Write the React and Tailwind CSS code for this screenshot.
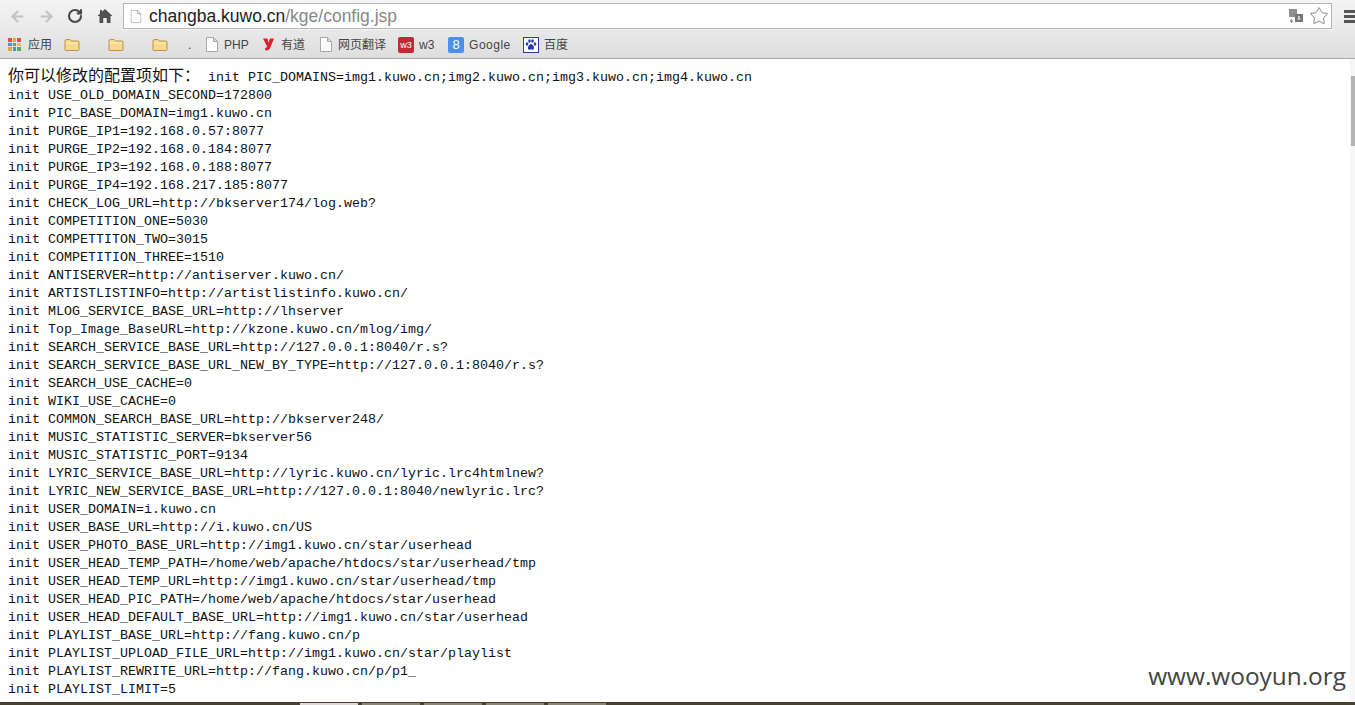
import { ArrowLeft, ArrowRight, RotateCw, Star } from "lucide-react";

const LINES = [
  "USE_OLD_DOMAIN_SECOND=172800",
  "PIC_BASE_DOMAIN=img1.kuwo.cn",
  "PURGE_IP1=192.168.0.57:8077",
  "PURGE_IP2=192.168.0.184:8077",
  "PURGE_IP3=192.168.0.188:8077",
  "PURGE_IP4=192.168.217.185:8077",
  "CHECK_LOG_URL=http://bkserver174/log.web?",
  "COMPETITION_ONE=5030",
  "COMPETTITON_TWO=3015",
  "COMPETITION_THREE=1510",
  "ANTISERVER=http://antiserver.kuwo.cn/",
  "ARTISTLISTINFO=http://artistlistinfo.kuwo.cn/",
  "MLOG_SERVICE_BASE_URL=http://lhserver",
  "Top_Image_BaseURL=http://kzone.kuwo.cn/mlog/img/",
  "SEARCH_SERVICE_BASE_URL=http://127.0.0.1:8040/r.s?",
  "SEARCH_SERVICE_BASE_URL_NEW_BY_TYPE=http://127.0.0.1:8040/r.s?",
  "SEARCH_USE_CACHE=0",
  "WIKI_USE_CACHE=0",
  "COMMON_SEARCH_BASE_URL=http://bkserver248/",
  "MUSIC_STATISTIC_SERVER=bkserver56",
  "MUSIC_STATISTIC_PORT=9134",
  "LYRIC_SERVICE_BASE_URL=http://lyric.kuwo.cn/lyric.lrc4htmlnew?",
  "LYRIC_NEW_SERVICE_BASE_URL=http://127.0.0.1:8040/newlyric.lrc?",
  "USER_DOMAIN=i.kuwo.cn",
  "USER_BASE_URL=http://i.kuwo.cn/US",
  "USER_PHOTO_BASE_URL=http://img1.kuwo.cn/star/userhead",
  "USER_HEAD_TEMP_PATH=/home/web/apache/htdocs/star/userhead/tmp",
  "USER_HEAD_TEMP_URL=http://img1.kuwo.cn/star/userhead/tmp",
  "USER_HEAD_PIC_PATH=/home/web/apache/htdocs/star/userhead",
  "USER_HEAD_DEFAULT_BASE_URL=http://img1.kuwo.cn/star/userhead",
  "PLAYLIST_BASE_URL=http://fang.kuwo.cn/p",
  "PLAYLIST_UPLOAD_FILE_URL=http://img1.kuwo.cn/star/playlist",
  "PLAYLIST_REWRITE_URL=http://fang.kuwo.cn/p/p1_",
  "PLAYLIST_LIMIT=5",
  "PLAYLIST_LIMIT_EX=10",
];

const APP_DOTS = ["#d9534a", "#e8a33c", "#d9534a", "#4a90d9", "#5cab5c", "#e8c13c", "#e8a33c", "#4a90d9", "#5cab5c"];

function Folder({ className }) {
  return (
    <svg width="16" height="14" viewBox="0 0 16 14" className={className}>
      <path d="M1 3 Q1 1.5 2.5 1.5 H6 L7.5 3 H14 Q15 3 15 4 V11.5 Q15 12.5 14 12.5 H2 Q1 12.5 1 11.5 Z" fill="#f6d98c" stroke="#b8934a" />
      <path d="M2 5 H14" stroke="#fdf0c4" />
    </svg>
  );
}

function Doc({ className }) {
  return (
    <svg width="12" height="15" viewBox="0 0 12 15" className={className}>
      <path d="M.5 .5 H7.5 L11.5 4.5 V14.5 H.5 Z M7.5 .5 V4.5 H11.5" fill="#fff" stroke="#a8a8a8" />
    </svg>
  );
}

function Apps() {
  return (
    <div className="ml-2 grid grid-cols-3 gap-[1px] w-[13px]">
      {APP_DOTS.map((c, i) => (
        <span key={i} className="block w-[3.6px] h-[3.6px]" style={{ backgroundColor: c }} />
      ))}
    </div>
  );
}

function Bookmarks() {
  return (
    <div className="h-[29px] flex items-center text-[12px] text-[#444] font-['Liberation_Sans','Noto_Sans_CJK_SC',sans-serif]">
      <Apps />
      <span className="ml-[7px]">应用</span>
      <Folder className="ml-[12px]" />
      <Folder className="ml-[28px]" />
      <Folder className="ml-[28px]" />
      <span className="ml-[20px] w-[3px]">.</span>
      <Doc className="ml-[15px]" />
      <span className="ml-[6px] w-[25px]">PHP</span>
      <svg width="11" height="13" viewBox="0 0 11 13" className="ml-[14px]">
        <path d="M0 .5 H4.5 L5.5 5 L7 .5 H11 L7.5 9 Q6.5 12.5 2.5 12.5 L2 10 Q4 10 4.2 8.6 Z" fill="#d8202c" />
      </svg>
      <span className="ml-[7px]">有道</span>
      <Doc className="ml-[15px]" />
      <span className="ml-[6px]">网页翻译</span>
      <span className="ml-[12px] w-[16px] h-[16px] rounded-[2px] bg-[#bd2c33] text-white text-[9px] leading-[16px] text-center">w3</span>
      <span className="ml-[5px] w-[16px]">w3</span>
      <span className="ml-[13px] w-[16px] h-[16px] rounded-[2px] bg-[#4a8fe8] text-white text-[13px] leading-[16px] text-center">8</span>
      <span className="ml-[5px] w-[42px] tracking-[0.5px]">Google</span>
      <svg width="16" height="16" viewBox="0 0 16 16" className="ml-[12px]">
        <rect x=".5" y=".5" width="15" height="15" fill="#fff" stroke="#2a3bb0" />
        <g fill="#2a3bb0">
          <ellipse cx="4" cy="7" rx="1.3" ry="1.8" />
          <ellipse cx="6.5" cy="4" rx="1.3" ry="1.8" />
          <ellipse cx="9.5" cy="4" rx="1.3" ry="1.8" />
          <ellipse cx="12" cy="7" rx="1.3" ry="1.8" />
          <path d="M8 7 C10 7 12 11 10.5 12.5 C9.5 13 8.5 12.5 8 12.5 C7.5 12.5 6.5 13 5.5 12.5 C4 11 6 7 8 7 Z" />
        </g>
      </svg>
      <span className="ml-[5px]">百度</span>
    </div>
  );
}

function Toolbar() {
  return (
    <div className="h-[30px] flex items-center pt-[2px]">
      <ArrowLeft size={17} strokeWidth={3} className="ml-[9px] text-[#c2c2c2]" />
      <ArrowRight size={17} strokeWidth={3} className="ml-[12px] text-[#c2c2c2]" />
      <RotateCw size={16} strokeWidth={3.2} className="ml-[12px] text-[#484848]" />
      <svg width="16" height="16" viewBox="0 0 16 16" className="ml-[14px] text-[#505050]">
        <path fill="currentColor" d="M8 1 L15.5 8 L13.5 8 V15 H9.8 V10 H6.2 V15 H2.5 V8 H.5 L3 5.6 V2 H5 V3.8 Z" />
      </svg>
      <div className="ml-[10px] w-[1209px] h-[26px] flex items-center bg-white border border-[#b5b5b5] shadow-[0_1px_0_#f4f4f4]">
        <Doc className="ml-[6px] scale-90" />
        <span className="ml-[7px] text-[17.5px] text-[#222] font-['Liberation_Sans',sans-serif]">
          changba.kuwo.cn<span className="text-[#888]">/kge/config.jsp</span>
        </span>
        <svg width="14" height="15" viewBox="0 0 14 15" className="ml-auto">
          <rect x="0" y="0" width="8" height="8" fill="#8f8f8f" />
          <rect x="6" y="5" width="8" height="8" fill="#777" />
          <path d="M9 11 L10 7 L11 11" stroke="#ddd" fill="none" />
          <path d="M1 12 H4 M2.5 10.5 V14" stroke="#777" />
        </svg>
        <Star size={20} strokeWidth={1} className="ml-[6px] mr-[2px] text-[#707070]" />
      </div>
      <div className="ml-auto w-[11px] flex flex-col gap-[2px]">
        <span className="h-[3px] bg-[#555]" />
        <span className="h-[3px] bg-[#555]" />
        <span className="h-[3px] bg-[#555]" />
      </div>
    </div>
  );
}

export default function App() {
  return (
    <div className="relative h-screen overflow-hidden flex flex-col bg-white">
      <div className="shrink-0 h-[59px] border-b border-[#a9a9a9] bg-gradient-to-b from-[#f4f4f4] to-[#dedede]">
        <Toolbar />
        <Bookmarks />
      </div>

      <div className="flex flex-1 min-h-0">
        <div className="flex-1 min-w-0 pl-[8px] pt-[9px] text-[13.33px] leading-[18px] text-[#111] font-['Liberation_Mono','Noto_Sans_CJK_SC',monospace] whitespace-pre">
          <div>
            <span className="text-[16px]">你可以修改的配置项如下：</span>{" init PIC_DOMAINS=img1.kuwo.cn;img2.kuwo.cn;img3.kuwo.cn;img4.kuwo.cn"}
          </div>
          {LINES.map((line) => (
            <div key={line}>init {line}</div>
          ))}
        </div>
        <div className="shrink-0 w-[5px] bg-[#f6f6f6] pt-[17px] pl-[1px]">
          <div className="h-[70px] bg-[#b4b4b4]" />
        </div>
      </div>

      <div className="absolute right-[9px] bottom-[17px] text-[24.4px] leading-none text-[#444] font-['Open_Sans',sans-serif]">
        www.wooyun.org
      </div>

      <div className="absolute left-0 right-0 bottom-0 h-[3px] bg-[#4a4030] flex pl-[300px] pt-[1px] gap-[4px]">
        <span className="w-[58px] bg-[#ddd8d0]" />
        <span className="w-[58px] bg-[#8d8478]" />
        <span className="w-[58px] bg-[#8d8478]" />
        <span className="w-[58px] bg-[#8d8478]" />
        <span className="w-[58px] bg-[#8d8478]" />
      </div>
    </div>
  );
}
